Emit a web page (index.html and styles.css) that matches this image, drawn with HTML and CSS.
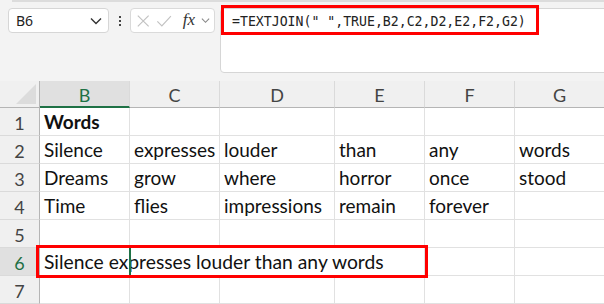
FILE: index.html
```html
<!DOCTYPE html>
<html lang="en">
<head>
    <meta charset="UTF-8">
    <title>TEXTJOIN</title>
    <link rel="stylesheet" href="styles.css">
</head>
<body>
    <div class="toolbar">
        <div class="topline"></div>
        <div class="bar">
            <div class="namebox">
                <span class="name">B6</span>
                <svg class="chev" width="12" height="8" viewBox="0 0 12 8"><path d="M1 1.5 L6 6.5 L11 1.5" fill="none" stroke="#333" stroke-width="1.4"/></svg>
            </div>
            <div class="dots"><i></i><i></i><i></i></div>
            <div class="fxbox">
                <svg width="16" height="16" viewBox="0 0 16 16"><path d="M2 2 L14 14 M14 2 L2 14" stroke="#c2c2c2" stroke-width="1.3"/></svg>
                <svg width="18" height="16" viewBox="0 0 18 16"><path d="M1.5 8.5 L6.5 13.5 L16.5 2.5" fill="none" stroke="#c2c2c2" stroke-width="1.3"/></svg>
                <span class="fx">fx</span>
                <svg width="10" height="7" viewBox="0 0 10 7"><path d="M1 1.5 L5 5.5 L9 1.5" fill="none" stroke="#888" stroke-width="1.2"/></svg>
            </div>
            <div class="formula">=TEXTJOIN(" ",TRUE,B2,C2,D2,E2,F2,G2)</div>
        </div>
        <div class="mark mark-formula"></div>
    </div>

    <div class="sheet">
        <div class="hd corner"><span class="tri"></span></div>
        <div class="hd col sel">B</div>
        <div class="hd col">C</div>
        <div class="hd col">D</div>
        <div class="hd col">E</div>
        <div class="hd col">F</div>
        <div class="hd col last">G</div>

        <div class="hd row">1</div>
        <div class="cell bold">Words</div>
        <div class="cell"></div><div class="cell"></div><div class="cell"></div><div class="cell"></div><div class="cell last"></div>

        <div class="hd row">2</div>
        <div class="cell">Silence</div>
        <div class="cell">expresses</div>
        <div class="cell">louder</div>
        <div class="cell">than</div>
        <div class="cell">any</div>
        <div class="cell last">words</div>

        <div class="hd row">3</div>
        <div class="cell">Dreams</div>
        <div class="cell">grow</div>
        <div class="cell">where</div>
        <div class="cell">horror</div>
        <div class="cell">once</div>
        <div class="cell last">stood</div>

        <div class="hd row">4</div>
        <div class="cell">Time</div>
        <div class="cell">flies</div>
        <div class="cell">impressions</div>
        <div class="cell">remain</div>
        <div class="cell">forever</div>
        <div class="cell last"></div>

        <div class="hd row">5</div>
        <div class="cell"></div><div class="cell"></div><div class="cell"></div><div class="cell"></div><div class="cell"></div><div class="cell last"></div>

        <div class="hd row sel">6</div>
        <div class="cell spill">Silence expresses louder than any words</div>
        <div class="cell"></div>
        <div class="cell last"></div>

        <div class="hd row">7</div>
        <div class="cell"></div><div class="cell"></div><div class="cell"></div><div class="cell"></div><div class="cell"></div><div class="cell last"></div>

        <div class="active"></div>
        <div class="mark mark-result"></div>
    </div>
</body>
</html>
```

FILE: styles.css
```css
body {
    margin: 0;
    background-color: #f3f3f3;
    font-family: 'Lato', sans-serif;
    overflow: hidden;
}
.toolbar {
    height: 81px;
    position: relative;
}
.topline {
    height: 2px;
    margin-left: 12px;
    background-color: #dcdcdc;
}
.bar {
    display: flex;
    align-items: flex-start;
    padding: 6px 0 0 8px;
}
.namebox {
    width: 101px;
    height: 25px;
    box-sizing: border-box;
    background-color: #ffffff;
    border: 1px solid #d6d6d6;
    border-radius: 4px;
    display: flex;
    align-items: center;
    justify-content: space-between;
    padding: 0 6px 0 7px;
}
.name {
    font-family: 'Noto Sans', sans-serif;
    font-size: 14px;
    color: #222;
}
.dots {
    width: 21px;
    height: 25px;
    display: flex;
    flex-direction: column;
    align-items: center;
    justify-content: center;
    gap: 2px;
}
.dots i {
    width: 2px;
    height: 2px;
    background-color: #444;
}
.fxbox {
    width: 85px;
    height: 25px;
    box-sizing: border-box;
    background-color: #ffffff;
    border: 1px solid #dadada;
    border-radius: 4px;
    display: flex;
    align-items: center;
    padding: 0 4px 0 5px;
    gap: 6px;
}
.fx {
    font-family: 'Liberation Serif', serif;
    font-style: italic;
    font-size: 17px;
    color: #333;
    margin-left: 4px;
    margin-top: -2px;
}
.formula {
    flex: 1;
    height: 65px;
    margin-left: 5px;
    margin-right: -6px;
    box-sizing: border-box;
    background-color: #ffffff;
    border: 1px solid #d6d6d6;
    border-radius: 4px 0 0 4px;
    padding: 5px 0 0 11px;
    font-family: 'DejaVu Sans Mono', monospace;
    font-size: 13.2px;
    color: #222;
}
.mark {
    position: absolute;
    border: 3px solid #f00;
    box-sizing: border-box;
}
.mark-formula {
    left: 221px;
    top: 5px;
    width: 318px;
    height: 30px;
}
.sheet {
    position: relative;
    display: grid;
    grid-template-columns: 40px 90px 90px 115px 90px 90px 89px;
    grid-template-rows: 27px repeat(7, 28px);
    background-color: #ffffff;
}
.hd {
    background-color: #f0f0f0;
    color: #444;
    font-size: 18px;
    box-sizing: border-box;
    display: flex;
    align-items: center;
    justify-content: center;
}
.col {
    border-right: 1px solid #dadada;
    border-bottom: 1px solid #b5b5b5;
    padding-top: 2px;
}
.col.last {
    border-right: none;
}
.col.sel {
    background-color: #e0e0e0;
    color: #1e7145;
    border-bottom: 2px solid #1e7145;
}
.corner {
    border-right: 1px solid #b5b5b5;
    border-bottom: 1px solid #b5b5b5;
    align-items: flex-end;
    justify-content: flex-end;
    padding: 0 3px 3px 0;
}
.tri {
    width: 20px;
    height: 20px;
    background-color: #dcdcdc;
    clip-path: polygon(100% 0, 100% 100%, 0 100%);
}
.row {
    border-right: 1px solid #b5b5b5;
    border-bottom: 1px solid #dadada;
    padding-top: 2px;
}
.row.sel {
    background-color: #e0e0e0;
    color: #1e7145;
}
.cell {
    box-sizing: border-box;
    border-right: 1px solid #e1e1e1;
    border-bottom: 1px solid #e1e1e1;
    font-size: 19px;
    color: #111;
    white-space: nowrap;
    display: flex;
    align-items: flex-end;
    padding: 0 0 2px 4px;
}
.cell.last {
    border-right: none;
}
.bold {
    font-weight: bold;
}
.spill {
    grid-column: span 4;
    font-size: 19.3px;
}
.active {
    position: absolute;
    left: 129px;
    top: 167px;
    width: 2px;
    height: 28px;
    background-color: #1e7145;
}
.mark-result {
    left: 36px;
    top: 164px;
    width: 392px;
    height: 33px;
}
```
